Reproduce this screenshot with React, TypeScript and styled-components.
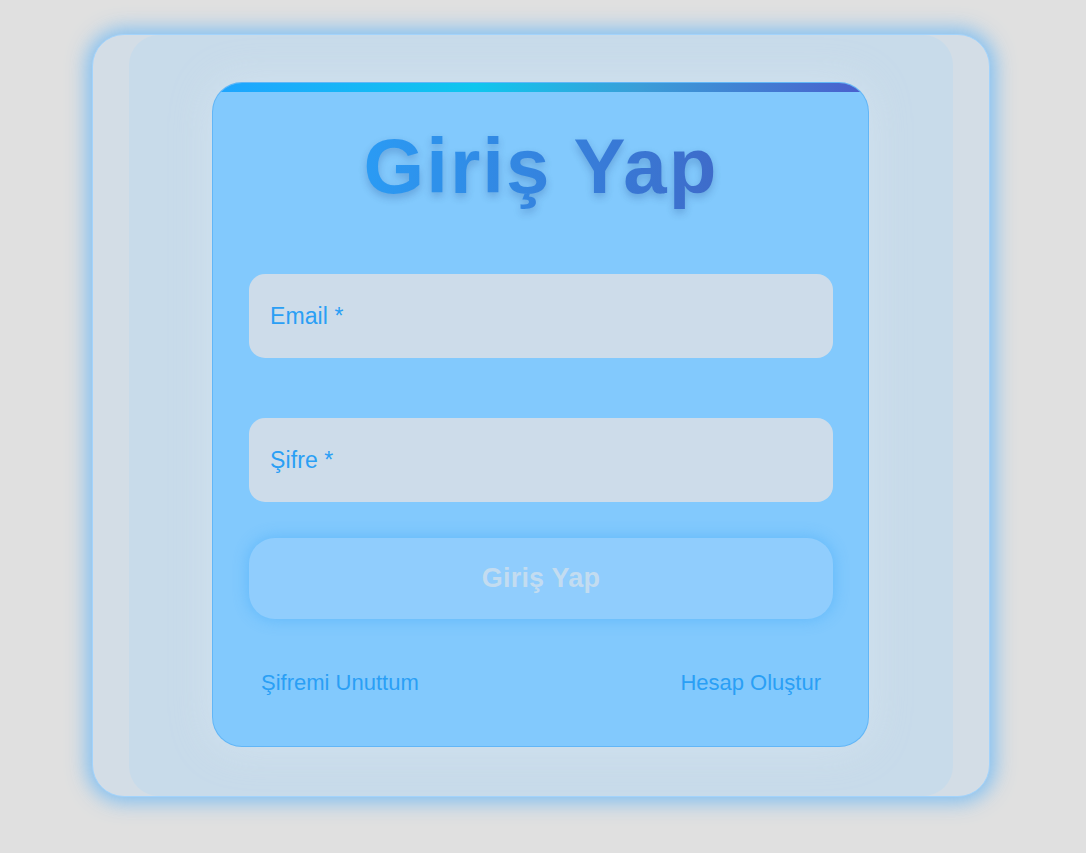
import React from "react";
import styled, { createGlobalStyle } from "styled-components";

const Global = createGlobalStyle`
  html, body { margin: 0; padding: 0; }
  body {
    background: #e0e0e0;
    font-family: "Liberation Sans", Arial, sans-serif;
    min-height: 853px;
  }
  * { box-sizing: border-box; }
`;

const Page = styled.div`
  display: flex;
  justify-content: center;
  padding-top: 34px;
`;

const Outer = styled.div`
  width: 898px;
  height: 763px;
  margin-left: -4px;
  display: flex;
  padding: 0 36px;
  background: #d3dde6;
  border: 1px solid #a3d3fb;
  border-radius: 32px;
  box-shadow: 0 0 20px 5px rgba(100, 181, 246, 0.8);
`;

const Inner = styled.div`
  flex: 1;
  display: flex;
  justify-content: center;
  padding: 47px 84px 49px 83px;
  background: #c8dbea;
  border-radius: 30px;
`;

const Card = styled.div`
  flex: 1;
  display: flex;
  flex-direction: column;
  background: #82c9fd;
  border: 1px solid rgba(60, 160, 240, 0.45);
  border-radius: 30px;
  overflow: hidden;
  box-shadow: 0 0 40px rgba(230, 240, 250, 0.35);
`;

const TopBar = styled.div`
  height: 9px;
  flex-shrink: 0;
  background: linear-gradient(90deg, #1fa4ff 0%, #0fc6ee 40%, #3a9ed8 65%, #4a5ecd 100%);
`;

const Body = styled.div`
  display: flex;
  flex-direction: column;
  padding: 0 35px 0 36px;
`;

const Title = styled.h1`
  margin: 31px 0 0;
  text-align: center;
  font-family: "Liberation Sans", Arial, sans-serif;
  font-weight: 700;
  font-size: 78px;
  line-height: 86px;
  letter-spacing: 2px;
  background: linear-gradient(90deg, #2196f3 20%, #3f51b5 100%);
  -webkit-background-clip: text;
  background-clip: text;
  color: transparent;
  filter: drop-shadow(0 4px 4px rgba(20, 60, 130, 0.3));
  opacity: 0.9;
`;

const Field = styled.div<{ $top: number }>`
  margin-top: ${(p) => p.$top}px;
  height: 84px;
  flex-shrink: 0;
  display: flex;
  align-items: center;
  padding-left: 21px;
  background: #cddcea;
  border-radius: 16px;
`;

const Label = styled.span`
  font-size: 23px;
  letter-spacing: 0.1px;
  color: #2a9ff5;
`;

const Button = styled.div`
  margin-top: 36px;
  height: 81px;
  flex-shrink: 0;
  display: flex;
  align-items: center;
  justify-content: center;
  background: #90cdfd;
  border-radius: 26px;
  box-shadow: 0 0 14px 2px rgba(66, 170, 250, 0.45);
  font-weight: 700;
  font-size: 27px;
  letter-spacing: 0.2px;
  color: #c3dcf0;
`;

const Links = styled.div`
  margin-top: 51px;
  display: flex;
  justify-content: space-between;
  padding: 0 12px;
`;

const LinkText = styled.span`
  font-size: 22px;
  color: #2a9ff5;
  line-height: 26px;
`;

export default function App() {
  return (
    <>
      <Global />
      <Page>
        <Outer>
          <Inner>
            <Card>
              <TopBar />
              <Body>
                <Title>Giriş Yap</Title>
                <Field $top={65}>
                  <Label>Email *</Label>
                </Field>
                <Field $top={60}>
                  <Label>Şifre *</Label>
                </Field>
                <Button>Giriş Yap</Button>
                <Links>
                  <LinkText>Şifremi Unuttum</LinkText>
                  <LinkText>Hesap Oluştur</LinkText>
                </Links>
              </Body>
            </Card>
          </Inner>
        </Outer>
      </Page>
    </>
  );
}
